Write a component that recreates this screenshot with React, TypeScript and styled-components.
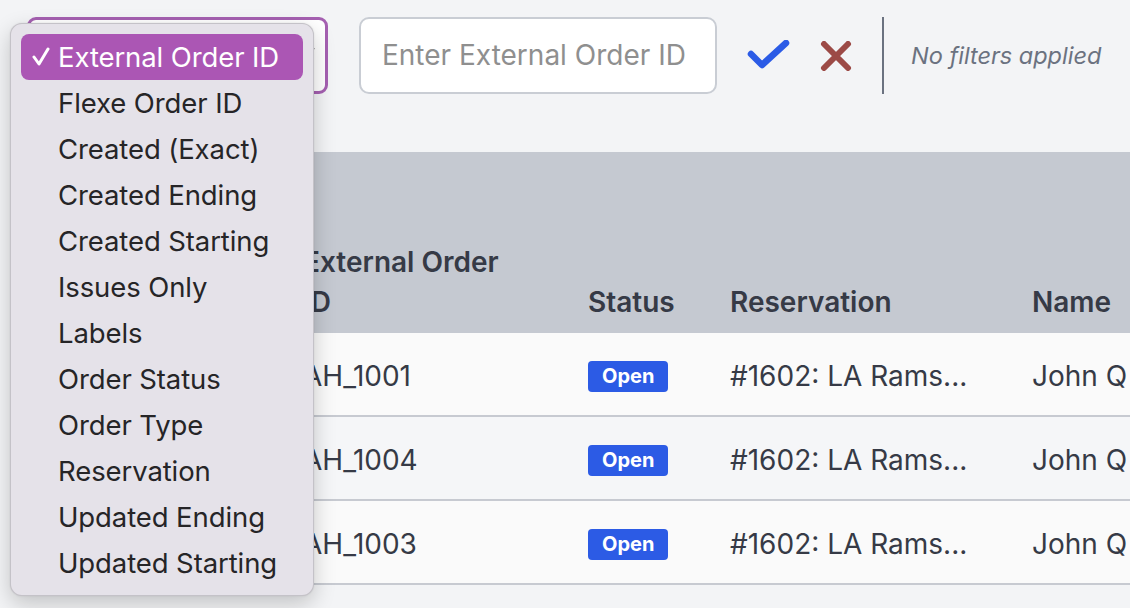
import React from "react"
import styled, { createGlobalStyle } from "styled-components"

const GlobalStyle = createGlobalStyle`
  html, body {
    margin: 0;
    padding: 0;
    background: #f3f4f6;
    font-family: "Inter", "Liberation Sans", sans-serif;
    overflow: hidden;
  }
  * {
    box-sizing: border-box;
  }
`

const filterOptions = [
  "External Order ID",
  "Flexe Order ID",
  "Created (Exact)",
  "Created Ending",
  "Created Starting",
  "Issues Only",
  "Labels",
  "Order Status",
  "Order Type",
  "Reservation",
  "Updated Ending",
  "Updated Starting",
]

const orders = [
  { externalId: "AH_1001", status: "Open", reservation: "#1602: LA Rams...", name: "John Q" },
  { externalId: "AH_1004", status: "Open", reservation: "#1602: LA Rams...", name: "John Q" },
  { externalId: "AH_1003", status: "Open", reservation: "#1602: LA Rams...", name: "John Q" },
]

const CheckIcon = () => (
  <svg width="44" height="32" viewBox="0 0 44 32">
    <polyline
      points="4,14 15,25 39,3"
      fill="none"
      stroke="#2b5be6"
      strokeWidth="6.5"
      strokeLinecap="round"
      strokeLinejoin="round"
    />
  </svg>
)

const CrossIcon = () => (
  <svg width="32" height="30" viewBox="0 0 32 30">
    <path
      d="M4 3 L28 27 M28 3 L4 27"
      fill="none"
      stroke="#9c4a46"
      strokeWidth="6"
      strokeLinecap="round"
    />
  </svg>
)

const MenuCheck = () => (
  <svg width="20" height="20" viewBox="0 0 20 20">
    <polyline
      points="3,10 8,17 17,2"
      fill="none"
      stroke="#ffffff"
      strokeWidth="3"
      strokeLinecap="round"
      strokeLinejoin="round"
    />
  </svg>
)

const Chevron = () => (
  <svg width="14" height="8" viewBox="0 0 14 8">
    <polyline points="1,1 7,7 13,1" fill="none" stroke="#4b4b4b" strokeWidth="2" />
  </svg>
)

const App: React.FC = () => {
  return (
    <Page>
      <GlobalStyle />
      <Toolbar>
        <SelectWrap>
          <SelectBox>
            <Chevron />
          </SelectBox>
          <Menu>
            {filterOptions.map((option, i) => (
              <MenuItem key={option} selected={i === 0}>
                {i === 0 && (
                  <CheckMark>
                    <MenuCheck />
                  </CheckMark>
                )}
                {option}
              </MenuItem>
            ))}
          </Menu>
        </SelectWrap>
        <SearchInput placeholder="Enter External Order ID" />
        <IconButton>
          <CheckIcon />
        </IconButton>
        <IconButton>
          <CrossIcon />
        </IconButton>
        <Divider />
        <FilterNote>No filters applied</FilterNote>
      </Toolbar>

      <Table>
        <HeaderRow>
          <HeaderCell />
          <HeaderCell>
            <Wrap>External Order ID</Wrap>
          </HeaderCell>
          <HeaderCell>Status</HeaderCell>
          <HeaderCell>Reservation</HeaderCell>
          <HeaderCell>Name</HeaderCell>
        </HeaderRow>
        {orders.map((order, i) => (
          <Row key={order.externalId} striped={i % 2 === 1}>
            <Cell />
            <Cell>{order.externalId}</Cell>
            <Cell>
              <Badge>{order.status}</Badge>
            </Cell>
            <Cell>{order.reservation}</Cell>
            <Cell>{order.name}</Cell>
          </Row>
        ))}
      </Table>
    </Page>
  )
}

const Page = styled.div`
  width: 1130px;
  height: 608px;
  padding: 17px 0 0 27px;
  overflow: hidden;
`

const Toolbar = styled.div`
  display: flex;
  align-items: center;
  height: 77px;
`

const SelectWrap = styled.div`
  position: relative;
  width: 301px;
  height: 77px;
`

const SelectBox = styled.div`
  width: 100%;
  height: 100%;
  display: flex;
  align-items: center;
  justify-content: flex-end;
  padding-right: 10px;
  padding-bottom: 10px;
  background: #ffffff;
  border: 3px solid #a560b1;
  border-radius: 9px;
`

const Menu = styled.ul`
  position: absolute;
  left: -17px;
  top: 6px;
  z-index: 10;
  width: 304px;
  height: 573px;
  margin: 0;
  padding: 10px 10px 0;
  list-style: none;
  background: #e5e2e9;
  border: 1px solid rgba(0, 0, 0, 0.14);
  border-radius: 12px;
  box-shadow: 0 8px 22px rgba(0, 0, 0, 0.2), 0 0 2px rgba(0, 0, 0, 0.1);
`

const MenuItem = styled.li<{ selected?: boolean }>`
  position: relative;
  height: 46px;
  display: flex;
  align-items: center;
  padding-left: 37px;
  border-radius: 8px;
  font-family: "Inter", sans-serif;
  font-size: 27.5px;
  letter-spacing: -0.1px;
  color: ${({ selected }) => (selected ? "#ffffff" : "#262527")};
  background: ${({ selected }) => (selected ? "#ab56b4" : "transparent")};
`

const CheckMark = styled.span`
  position: absolute;
  left: 10px;
  top: 13px;
  display: flex;
`

const SearchInput = styled.input`
  margin-left: 31px;
  width: 358px;
  height: 77px;
  padding: 0 0 2px 21px;
  background: #ffffff;
  border: 2px solid #c9cdd4;
  border-radius: 10px;
  font-family: "Inter", sans-serif;
  font-size: 28px;
  outline: none;

  &::placeholder {
    color: #8f8f8f;
  }
`

const IconButton = styled.button`
  display: flex;
  align-items: center;
  margin-left: 30px;
  padding: 0;
  border: none;
  background: transparent;
  cursor: pointer;

  & + & {
    margin-left: 29px;
  }
`

const Divider = styled.div`
  width: 2px;
  height: 77px;
  margin-left: 30px;
  background: #6b7280;
`

const FilterNote = styled.span`
  margin-left: 27px;
  font-size: 23.5px;
  font-style: italic;
  color: #6b7280;
`

const Table = styled.div`
  margin-top: 58px;
  width: 1240px;
  font-family: "Inter", sans-serif;
`

const columns = "260px 285px 142px 302px 251px"

const HeaderRow = styled.div`
  display: grid;
  grid-template-columns: ${columns};
  height: 181px;
  background: #c5c9d1;
`

const HeaderCell = styled.div`
  display: flex;
  align-items: flex-end;
  padding: 0 0 11px 16px;
  font-size: 28px;
  font-weight: 600;
  line-height: 40px;
  color: #363a46;
`

const Wrap = styled.span`
  max-width: 215px;
`

const Row = styled.div<{ striped?: boolean }>`
  display: grid;
  grid-template-columns: ${columns};
  height: 84px;
  padding-top: 4px;
  background: ${({ striped }) => (striped ? "#f5f6f8" : "#fafafa")};
  border-bottom: 2px solid #c7cad1;
`

const Cell = styled.div`
  display: flex;
  align-items: center;
  padding-left: 16px;
  font-size: 28px;
  color: #363a46;
  white-space: nowrap;
  overflow: hidden;
`

const Badge = styled.span`
  display: inline-flex;
  align-items: center;
  height: 31px;
  padding: 0 14px;
  border-radius: 4px;
  background: #2c5be5;
  color: #ffffff;
  font-size: 20px;
  font-weight: 700;
`

export default App
